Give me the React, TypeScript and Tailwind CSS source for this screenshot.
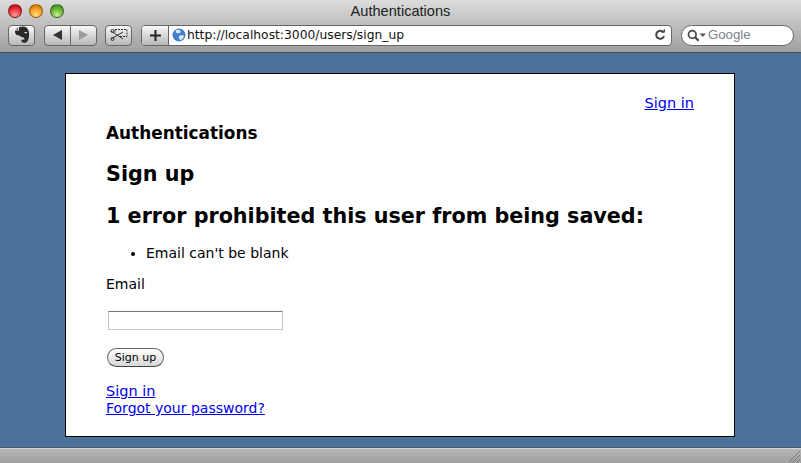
function TrafficLight({ from, to }: { from: string; to: string }) {
  return (
    <span
      className="w-[14px] h-[14px] rounded-full border border-black/40"
      style={{ background: `radial-gradient(circle at 50% 85%, ${to}, ${from} 75%)` }}
    />
  );
}

function ToolButton({ children, className = '' }: { children: React.ReactNode; className?: string }) {
  return (
    <div className={`h-[21px] flex items-center justify-center rounded-[4px] border border-[#666] bg-gradient-to-b from-[#f8f8f8] to-[#b8b8b8] ${className}`}>
      {children}
    </div>
  );
}

export default function App() {
  return (
    <div className="w-[801px] h-[463px] flex flex-col overflow-hidden bg-[#4b7299] font-['DejaVu_Sans',sans-serif] text-black">
      {/* Window toolbar */}
      <div className="h-[53px] shrink-0 flex flex-col bg-gradient-to-b from-[#dcdcdc] to-[#a0a0a0] border-b border-[#4a4f55]">
        <div className="h-[24px] relative flex items-center pl-[8px] gap-[7px] pb-[2px]">
          <TrafficLight from="#d8101c" to="#ff9a9a" />
          <TrafficLight from="#e88408" to="#ffe080" />
          <TrafficLight from="#4c9c1c" to="#c4f090" />
          <span className="absolute inset-x-0 top-[3px] text-center text-[14.6px] leading-[16px] text-[#222] font-['Liberation_Sans',sans-serif]">
            Authentications
          </span>
        </div>
        <div className="flex items-center pl-[8px] h-[22px]">
          <ToolButton className="w-[27px]">
            {/* evernote elephant */}
            <svg width="16" height="18" viewBox="0 0 16 18">
              <path d="M5 1 L9 0.5 Q13 0.5 13.5 3 Q15.5 5 15 10 Q14.5 15 12 16.5 Q9 17.5 7.5 15.5 Q7 13.5 9.5 13.5 L10.5 14.5 L10 11.5 Q6.5 11.5 5.5 9.5 L2.5 9 Q0.5 7 1 4.5 L5 4.5 Z" fill="#2a2a2a" />
              <path d="M10.5 6 h2.5 v1.2 h-2.5 Z" fill="#e0e0e0" />
              <path d="M2 3.5 L4 1.5 V3.5 Z" fill="#2a2a2a" />
            </svg>
          </ToolButton>
          <div className="ml-[9px] w-[53px] h-[21px] flex rounded-[4px] border border-[#666] bg-gradient-to-b from-[#f8f8f8] to-[#b8b8b8]">
            <div className="flex-1 flex items-center justify-center border-r border-[#666]">
              <svg width="9" height="10" viewBox="0 0 9 10"><path d="M0 5 L9 0 V10 Z" fill="#333" /></svg>
            </div>
            <div className="flex-1 flex items-center justify-center">
              <svg width="9" height="10" viewBox="0 0 9 10"><path d="M9 5 L0 0 V10 Z" fill="#9a9a9a" /></svg>
            </div>
          </div>
          <ToolButton className="ml-[8px] w-[27px]">
            <svg width="18" height="14" viewBox="0 0 18 14" fill="none" stroke="#333">
              <path d="M5 1.5 H17 V8.5 H10" strokeDasharray="2 1" />
              <path d="M5 1.5 V5" strokeDasharray="2 1" />
              <path d="M1 3 L13 11 M1 11 L13 4" />
              <circle cx="2.5" cy="3" r="1.5" />
              <circle cx="2.5" cy="11" r="1.5" />
            </svg>
          </ToolButton>
          <div className="ml-[9px] w-[531px] h-[21px] flex rounded-[4px] border border-[#666] bg-white overflow-hidden">
            <div className="w-[27px] flex items-center justify-center border-r border-[#666] bg-gradient-to-b from-[#f8f8f8] to-[#b8b8b8]">
              <svg width="11" height="11" viewBox="0 0 11 11"><path d="M4.5 0 H6.5 V11 H4.5 Z M0 4.5 H11 V6.5 H0 Z" fill="#222" /></svg>
            </div>
            <div className="flex-1 flex items-center pl-[3px] pr-[5px]">
              <svg width="14" height="14" viewBox="0 0 14 14" className="shrink-0">
                <circle cx="7" cy="7" r="6.5" fill="#3f7fd0" />
                <path d="M4 2 Q8 1 9 4 Q7 6 5 5 Q3 5 4 2 Z M7 8 Q11 6 12 8 Q11 12 8 12 Q6 10 7 8 Z" fill="#dbe9f8" />
              </svg>
              <span className="ml-[1px] text-[12.3px] leading-[14px] text-[#111]">http://localhost:3000/users/sign_up</span>
              <svg width="12" height="12" viewBox="0 0 12 12" fill="none" className="ml-auto" stroke="#444" strokeWidth="2">
                <path d="M9.5 3.5 A4 4 0 1 0 10 7" />
                <path d="M7 3.5 H11 V0" fill="#444" stroke="none" />
              </svg>
            </div>
          </div>
          <div className="ml-[9px] w-[113px] h-[21px] flex items-center rounded-full border border-[#666] bg-white pl-[5px]">
            <svg width="20" height="13" viewBox="0 0 19 12" fill="none" stroke="#444" strokeWidth="1.6">
              <circle cx="5" cy="5" r="3.6" />
              <path d="M8 8 L11 11" strokeWidth="2" />
              <path d="M12 4 H18 L15 7.5 Z" fill="#555" stroke="none" />
            </svg>
            <span className="ml-[1px] text-[13.2px] leading-[14px] text-[#7a7f88] font-['Liberation_Sans',sans-serif]">Google</span>
          </div>
        </div>
      </div>

      {/* Page */}
      <div className="flex-1 min-h-0 pt-[20px] pl-[65px] pr-[66px]">
        <div className="h-[364px] bg-white border border-black pt-[21px] px-[40px] text-[14px] leading-[17px]">
          <div className="text-right">
            <a href="#" className="text-[#0000ee] underline text-[14.5px]">Sign in</a>
          </div>
          <div className="mt-[11px] text-[16.9px] leading-[20px] font-bold">Authentications</div>
          <h1 className="mt-[18px] text-[20.7px] leading-[26px] font-bold">Sign up</h1>
          <h2 className="mt-[16px] text-[20.7px] leading-[26px] font-bold">1 error prohibited this user from being saved:</h2>
          <ul className="mt-[16px] pl-[40px] list-disc">
            <li>Email can't be blank</li>
          </ul>
          <div className="mt-[14px]">Email</div>
          <input className="block mt-[18px] ml-[2px] w-[175px] h-[19px] bg-white border border-[#c4c4c4] border-t-[#777]" />
          <button className="block mt-[18px] ml-[1px] w-[57px] h-[19px] rounded-full border border-[#666] border-b-[#444] bg-gradient-to-b from-white to-[#d8d8d8] text-[11px] leading-[15px] text-black">
            Sign up
          </button>
          <div className="mt-[16px]">
            <a href="#" className="block text-[#0000ee] underline text-[14.5px]">Sign in</a>
            <a href="#" className="block text-[#0000ee] underline">Forgot your password?</a>
          </div>
        </div>
      </div>

      {/* Status bar */}
      <div className="h-[16px] shrink-0 relative bg-gradient-to-b from-[#b8b8b8] to-[#a0a0a0] border-t border-[#4a5a68] shadow-[inset_0_1px_0_#d4d4d4]">
        <svg width="12" height="12" viewBox="0 0 12 12" className="absolute right-[1px] bottom-[1px]" stroke="#777">
          <path d="M1 12 L12 1 M5 12 L12 5 M9 12 L12 9" />
        </svg>
      </div>
    </div>
  );
}
